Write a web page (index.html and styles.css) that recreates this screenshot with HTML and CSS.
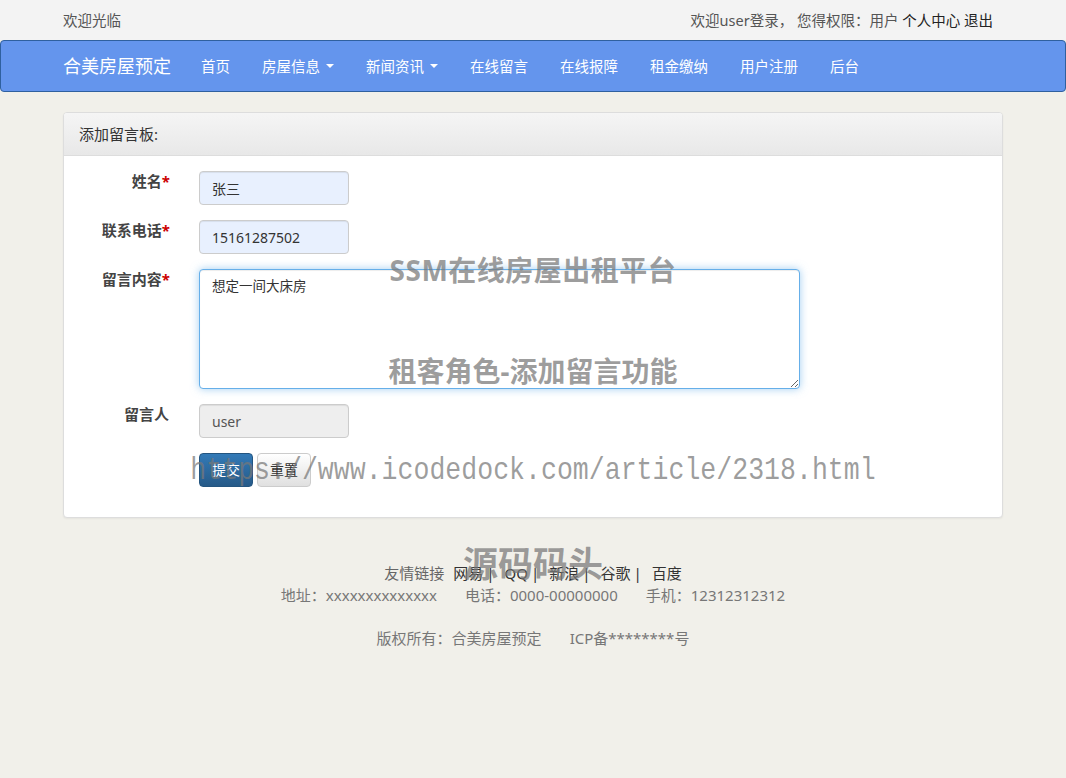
FILE: index.html
```html
<!DOCTYPE html>
<html lang="zh-CN">
<head>
<meta charset="UTF-8">
<meta name="viewport" content="width=device-width, initial-scale=1.0">
<title>合美房屋预定 - 添加留言</title>
<link rel="stylesheet" href="styles.css">
</head>
<body>
<div class="topbar">
<div class="container topbar-inner">
<span>欢迎光临</span>
<span class="user-info">欢迎user登录， 您得权限：用户 <a href="#">个人中心</a> <a href="#">退出</a></span>
</div>
</div>
<div class="navbar">
<div class="container nav-inner">
<a class="brand" href="#">合美房屋预定</a>
<a class="nav-link" href="#">首页</a>
<a class="nav-link" href="#">房屋信息<span class="caret"></span></a>
<a class="nav-link" href="#">新闻资讯<span class="caret"></span></a>
<a class="nav-link" href="#">在线留言</a>
<a class="nav-link" href="#">在线报障</a>
<a class="nav-link" href="#">租金缴纳</a>
<a class="nav-link" href="#">用户注册</a>
<a class="nav-link" href="#">后台</a>
</div>
</div>
<div class="container">
<div class="panel">
<div class="panel-heading">添加留言板:</div>
<form class="panel-body">
<div class="form-group">
<label for="name">姓名<span class="req">*</span></label>
<input class="field autofill" type="text" id="name" value="张三">
</div>
<div class="form-group">
<label for="phone">联系电话<span class="req">*</span></label>
<input class="field autofill" type="text" id="phone" value="15161287502">
</div>
<div class="form-group">
<label for="content">留言内容<span class="req">*</span></label>
<textarea class="field message" id="content">想定一间大床房</textarea>
</div>
<div class="form-group">
<label for="author" class="plain">留言人</label>
<input class="field readonly" type="text" id="author" value="user" readonly>
</div>
<div class="form-group">
<span></span>
<div class="actions">
<button type="button" class="btn btn-primary">提交</button>
<button type="reset" class="btn btn-default">重置</button>
</div>
</div>
</form>
</div>
</div>
<div class="footer">
<p class="links"><span class="muted">友情链接</span><a href="#">网易</a><span class="sep">|</span><a href="#">QQ</a><span class="sep">|</span><a href="#">新浪</a><span class="sep">|</span><a href="#">谷歌</a><span class="sep">|</span><a href="#">百度</a></p>
<p class="contact"><span>地址：xxxxxxxxxxxxxx</span><span>电话：0000-00000000</span><span>手机：12312312312</span></p>
<p class="contact copyright"><span>版权所有：合美房屋预定</span><span>ICP备********号</span></p>
</div>
<div class="wm wm-title">SSM在线房屋出租平台</div>
<div class="wm wm-role">租客角色-添加留言功能</div>
<div class="wm wm-url">https://www.icodedock.com/article/2318.html</div>
<div class="wm wm-site">源码码头</div>
</body>
</html>
```
FILE: styles.css
```css
body { margin: 0; font-family: "Noto Sans", "Noto Sans CJK SC", sans-serif; font-size: 15px; color: #333; background-color: #f1f0ea; }
a { text-decoration: none; color: #333; }
.container { width: 940px; margin: 0 auto; }
.topbar { background-color: #f3f3f3; height: 40px; line-height: 40px; color: #555; font-size: 14.5px; }
.topbar-inner { display: flex; justify-content: space-between; }
.user-info { padding-right: 10px; }
.user-info a { color: #222; }
.navbar { height: 50px; background-color: #6495ed; border: 1px solid #2f609f; border-radius: 4px; }
.nav-inner { display: flex; align-items: center; height: 50px; }
.brand { color: #fff; font-size: 18px; padding-right: 14px; line-height: 50px; }
.nav-link { color: #fff; font-size: 14.5px; padding: 0 16px; line-height: 50px; display: flex; align-items: center; }
.caret { display: inline-block; width: 0; height: 0; margin-left: 6px; border-top: 4px solid #fff; border-left: 4px solid transparent; border-right: 4px solid transparent; }
.panel { margin-top: 20px; margin-bottom: 20px; background-color: #fff; border: 1px solid #ddd; border-radius: 4px; box-shadow: 0 1px 2px rgba(0, 0, 0, 0.05); }
.panel-heading { padding: 10px 15px; line-height: 22px; background: linear-gradient(#f5f5f5, #e8e8e8); border-bottom: 1px solid #ddd; border-radius: 3px 3px 0 0; }
.panel-body { padding: 15px; }
.form-group { display: grid; grid-template-columns: 91px 1fr; column-gap: 29px; margin-bottom: 15px; }
.form-group label { text-align: right; font-weight: bold; line-height: 20px; color: #444; }
.form-group label.plain { padding-right: 1px; }
.req { color: #c00; }
.field { box-sizing: border-box; width: 150px; height: 34px; padding: 6px 12px; font-family: inherit; font-size: 14px; color: #333; border: 1px solid #ccc; border-radius: 4px; box-shadow: inset 0 1px 1px rgba(0, 0, 0, 0.075); outline: none; }
.autofill { background-color: #e8f0fe; }
.readonly { background-color: #eee; color: #555; }
.message { width: 601px; height: 120px; border-color: #66afe9; box-shadow: inset 0 1px 1px rgba(0, 0, 0, 0.075), 0 0 8px rgba(102, 175, 233, 0.6); line-height: 20px; font-size: 13.5px; }
.actions { display: flex; gap: 4px; }
.btn { height: 34px; padding: 6px 12px; font-family: inherit; font-size: 14px; border-radius: 4px; border: 1px solid; cursor: pointer; line-height: 20px; }
.btn-primary { color: #fff; background: linear-gradient(#337ab7, #265a88); border-color: #245580; }
.btn-default { color: #333; background: linear-gradient(#fff, #e0e0e0); border-color: #ccc; }
.footer { text-align: center; padding-top: 24px; }
.footer p { margin: 0; line-height: 22px; }
.footer .muted { color: #666; margin-right: 9px; }
.footer .sep { margin: 0 10px 0 3px; }
.contact { color: #777; }
.contact span { margin: 0 14px; }
.copyright { margin-top: 21px !important; }
.wm { position: absolute; left: 0; right: 0; text-align: center; color: rgba(120, 120, 120, 0.72); font-weight: bold; pointer-events: none; }
.wm-title { top: 252px; font-size: 28px; line-height: 36px; letter-spacing: 0.5px; }
.wm-role { top: 353px; font-size: 28px; line-height: 36px; }
.wm-url { top: 451px; font-family: "Liberation Mono", monospace; font-weight: normal; font-size: 32px; line-height: 40px; transform: scaleX(0.83); }
.wm-site { top: 541px; font-size: 35px; line-height: 46px; }
```
